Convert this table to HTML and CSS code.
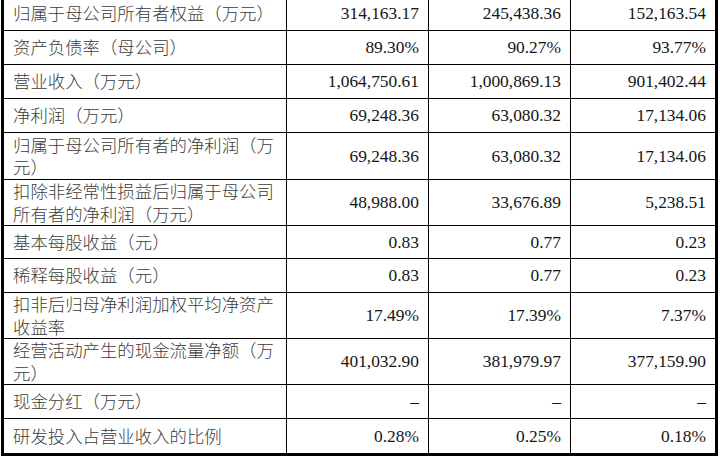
FILE: index.html
```html
<!DOCTYPE html>
<html lang="zh-CN">
<head>
<meta charset="utf-8">
<link rel="stylesheet" href="styles.css">
</head>
<body>
<table class="fin">
  <colgroup>
    <col class="c-label"><col class="c-num"><col class="c-num"><col class="c-last">
  </colgroup>
  <tbody>
    <tr class="one"><td class="lbl">归属于母公司所有者权益（万元）</td><td class="num">314,163.17</td><td class="num">245,438.36</td><td class="num">152,163.54</td></tr>
    <tr class="one"><td class="lbl">资产负债率（母公司）</td><td class="num">89.30%</td><td class="num">90.27%</td><td class="num">93.77%</td></tr>
    <tr class="one"><td class="lbl">营业收入（万元）</td><td class="num">1,064,750.61</td><td class="num">1,000,869.13</td><td class="num">901,402.44</td></tr>
    <tr class="one"><td class="lbl">净利润（万元）</td><td class="num">69,248.36</td><td class="num">63,080.32</td><td class="num">17,134.06</td></tr>
    <tr class="two tall"><td class="lbl">归属于母公司所有者的净利润（万元）</td><td class="num">69,248.36</td><td class="num">63,080.32</td><td class="num">17,134.06</td></tr>
    <tr class="two"><td class="lbl">扣除非经常性损益后归属于母公司所有者的净利润（万元）</td><td class="num">48,988.00</td><td class="num">33,676.89</td><td class="num">5,238.51</td></tr>
    <tr class="one short"><td class="lbl">基本每股收益（元）</td><td class="num">0.83</td><td class="num">0.77</td><td class="num">0.23</td></tr>
    <tr class="one"><td class="lbl">稀释每股收益（元）</td><td class="num">0.83</td><td class="num">0.77</td><td class="num">0.23</td></tr>
    <tr class="two"><td class="lbl">扣非后归母净利润加权平均净资产收益率</td><td class="num">17.49%</td><td class="num">17.39%</td><td class="num">7.37%</td></tr>
    <tr class="two"><td class="lbl">经营活动产生的现金流量净额（万元）</td><td class="num">401,032.90</td><td class="num">381,979.97</td><td class="num">377,159.90</td></tr>
    <tr class="one"><td class="lbl">现金分红（万元）</td><td class="num">–</td><td class="num">–</td><td class="num">–</td></tr>
    <tr class="one last"><td class="lbl">研发投入占营业收入的比例</td><td class="num">0.28%</td><td class="num">0.25%</td><td class="num">0.18%</td></tr>
  </tbody>
</table>
</body>
</html>
```

FILE: styles.css
```css
html, body {
  margin: 0;
  padding: 0;
  background: #ffffff;
}

.fin {
  margin: -3px 0 0 1px;
  border-collapse: separate;
  border-spacing: 0;
  table-layout: fixed;
  width: 717px;
  border-left: 3px solid #000;
  border-right: 3px solid #000;
  border-bottom: 3px solid #000;
  font-family: "Liberation Serif", "Noto Sans CJK SC", serif;
  font-size: 17.4px;
  line-height: 22.5px;
}

.c-label { width: 283px; }
.c-num { width: 142px; }
.c-last { width: 144px; }

.fin td {
  padding: 0;
  border-bottom: 1px solid #000;
  border-right: 1px solid #000;
  vertical-align: middle;
  box-sizing: border-box;
}

.fin td:last-child {
  border-right: none;
}

.fin tr.last td {
  border-bottom: none;
}

.fin tr.one td { height: 34px; }
.fin tr.short td { height: 33px; }
.fin tr.two td { height: 46px; }
.fin tr.tall td { height: 47px; }
.fin tr.last td { height: 34px; }

.lbl {
  padding-left: 9px !important;
  padding-right: 4px !important;
  color: #3c3c3c;
  font-family: "Noto Sans CJK SC", sans-serif;
  font-weight: 300;
}

.num {
  text-align: right;
  padding-right: 9px !important;
  color: #151515;
}
```
